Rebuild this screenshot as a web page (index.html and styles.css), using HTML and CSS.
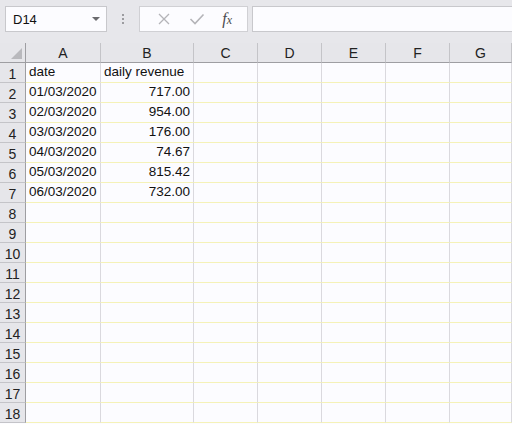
FILE: index.html
```html
<!DOCTYPE html>
<html lang="en">
<head>
    <meta charset="UTF-8">
    <title>Sheet1</title>
    <link rel="stylesheet" href="styles.css">
</head>
<body>
    <div class="toolbar">
        <div class="name-box">
            <span>D14</span>
            <span class="caret"></span>
        </div>
        <div class="grip"><i></i><i></i><i></i></div>
        <div class="fx-buttons">
            <svg class="btn-icon" width="14" height="14" viewBox="0 0 14 14"><path d="M2 2 L12 12 M12 2 L2 12" stroke="#b4b4b8" stroke-width="1.3" fill="none"/></svg>
            <svg class="btn-icon" width="16" height="14" viewBox="0 0 16 14"><path d="M1.5 7 L6 11.5 L14.5 2.5" stroke="#b4b4b8" stroke-width="1.6" fill="none"/></svg>
            <span class="fx">f<sub>x</sub></span>
        </div>
        <div class="formula"></div>
    </div>

    <div class="sheet" id="sheet">
        <div class="hd corner"><span class="tri"></span></div>
        <div class="hd">A</div>
        <div class="hd">B</div>
        <div class="hd">C</div>
        <div class="hd">D</div>
        <div class="hd">E</div>
        <div class="hd">F</div>
        <div class="hd">G</div>
    </div>

    <script>
        // Sheet data: [date, daily revenue]
        var rows = [
            ['date', 'daily revenue'],
            ['01/03/2020', '717.00'],
            ['02/03/2020', '954.00'],
            ['03/03/2020', '176.00'],
            ['04/03/2020', '74.67'],
            ['05/03/2020', '815.42'],
            ['06/03/2020', '732.00']
        ];
        var sheet = document.getElementById('sheet');
        for (var r = 1; r <= 18; r++) {
            var num = document.createElement('div');
            num.className = 'rh';
            num.textContent = r;
            sheet.appendChild(num);
            var data = rows[r - 1] || [];
            for (var c = 0; c < 7; c++) {
                var cell = document.createElement('div');
                cell.className = 'cell';
                if (data[c]) {
                    cell.textContent = data[c];
                    if (r > 1 && c === 1) cell.className += ' num';
                }
                sheet.appendChild(cell);
            }
        }
    </script>
</body>
</html>
```

FILE: styles.css
```css
* {
    margin: 0;
    padding: 0;
    box-sizing: border-box;
}

body {
    font-family: 'Liberation Sans', Arial, sans-serif;
    font-size: 13.5px;
    color: #111;
    background: #fcfcff;
    width: 512px;
    height: 424px;
    overflow: hidden;
}

.toolbar {
    display: flex;
    align-items: center;
    height: 43px;
    padding: 0 0 5px 5px;
    background: #e7e7eb;
}

.name-box {
    display: flex;
    align-items: center;
    justify-content: space-between;
    width: 102px;
    height: 26px;
    padding: 0 6px 0 7px;
    background: #fcfcff;
    border: 1px solid #c8c8cc;
    font-size: 13px;
}

.caret {
    width: 0;
    height: 0;
    border-left: 4px solid transparent;
    border-right: 4px solid transparent;
    border-top: 4px solid #6a6a6e;
}

.grip {
    display: flex;
    flex-direction: column;
    gap: 2px;
    margin: 0 15px 0 15px;
}

.grip i {
    display: block;
    width: 2px;
    height: 2px;
    background: #9c9ca0;
}

.fx-buttons {
    display: flex;
    align-items: center;
    justify-content: space-around;
    width: 109px;
    height: 26px;
    padding: 0 6px 0 8px;
    background: #fcfcff;
    border: 1px solid #d0d0d4;
}

.fx {
    font-family: 'Liberation Serif', 'Times New Roman', serif;
    font-style: italic;
    font-size: 16px;
    color: #4a4a4e;
    line-height: 1;
}

.fx sub {
    font-size: 12px;
    vertical-align: 0;
}

.formula {
    flex: 1;
    height: 26px;
    margin-left: 4px;
    background: #fcfcff;
    border: 1px solid #c8c8cc;
    border-right: none;
}

.sheet {
    display: grid;
    grid-template-columns: 26px 75px 93px 64px 64px 64px 64px 1fr;
    grid-auto-rows: 20px;
}

.hd,
.rh {
    display: flex;
    align-items: center;
    justify-content: center;
    background: #e6e6ea;
    color: #222;
    font-size: 14px;
}

.hd {
    border-right: 1px solid #c4c4c8;
    border-bottom: 1px solid #9e9ea2;
    padding-top: 1px;
}

.corner {
    position: relative;
    border-right-color: #9e9ea2;
}

.tri {
    position: absolute;
    right: 3px;
    bottom: 3px;
    width: 0;
    height: 0;
    border-left: 11px solid transparent;
    border-bottom: 11px solid #b9b9bd;
}

.rh {
    border-right: 1px solid #9e9ea2;
    border-bottom: 1px solid #c4c4c8;
    padding-top: 2px;
}

.cell {
    display: flex;
    align-items: flex-end;
    padding: 0 3px 1px 3px;
    white-space: nowrap;
    border-right: 1px solid #dad9de;
    border-bottom: 1px solid #f5f2b8;
    line-height: 18px;
}

.cell.num {
    justify-content: flex-end;
}
```
